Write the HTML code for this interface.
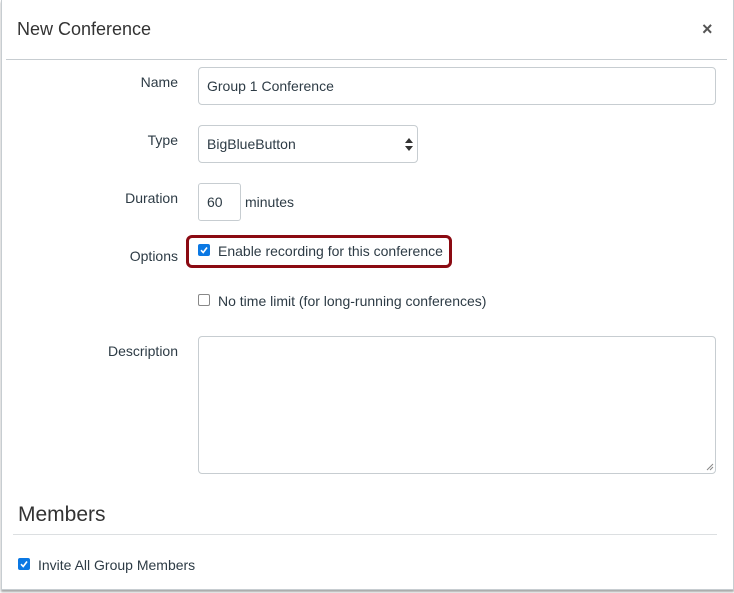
<!DOCTYPE html>
<html><head><style>
body{margin:0;width:734px;height:593px;background:#fff;font-family:"Liberation Sans",sans-serif;color:#2d3b45;position:relative;overflow:hidden}
.a{position:absolute}
.frame{left:1px;top:0;width:731px;height:589px;border:1px solid #c7cdd1;border-top:none;box-shadow:0 2px 2px rgba(0,0,0,.35)}
.lbl{font-size:14px;text-align:right;width:178px;left:0}
.box{border:1px solid #c7cdd1;border-radius:4px;background:#fff;box-sizing:border-box}
.t{font-size:14px}
.cb{width:12px;height:12px;border-radius:2px;box-sizing:border-box}
.on{background:#0b78e3}
.off{border:1px solid #888;background:#fff}
</style></head><body>
<div class="a frame"></div>
<div class="a" style="left:17px;top:19px;font-size:18px;color:#333">New Conference</div>
<div class="a" style="left:702px;top:19px;font-size:18px;font-weight:bold;color:#555">×</div>
<div class="a" style="left:6px;top:59px;width:721px;height:1px;background:#c7cdd1"></div>

<div class="a lbl" style="top:74px">Name</div>
<div class="a box" style="left:198px;top:67px;width:518px;height:38px"></div>
<div class="a t" style="left:207px;top:78px">Group 1 Conference</div>

<div class="a lbl" style="top:132px">Type</div>
<div class="a box" style="left:198px;top:125px;width:220px;height:38px;background:#fff"></div>
<div class="a t" style="left:207px;top:136px">BigBlueButton</div>
<svg class="a" style="left:405px;top:138px" width="8" height="13"><path d="M0 5L4 0L8 5Z M0 8L4 13L8 8Z" fill="#333"/></svg>

<div class="a lbl" style="top:190px">Duration</div>
<div class="a box" style="left:198px;top:183px;width:43px;height:38px;border-radius:3px"></div>
<div class="a t" style="left:207px;top:194px">60</div>
<div class="a t" style="left:245px;top:194px">minutes</div>

<div class="a lbl" style="top:248px">Options</div>
<div class="a" style="left:186px;top:235px;width:260px;height:27px;border:3px solid #8b0a12;border-radius:6px"></div>
<svg class="a" style="left:198px;top:244px" width="12" height="12"><rect width="12" height="12" rx="2" fill="#0b78e3"/><path d="M3 6.2L5.2 8.5L9 3.5" stroke="#fff" stroke-width="1.6" fill="none"/></svg>
<div class="a t" style="left:218px;top:243px">Enable recording for this conference</div>

<div class="a cb off" style="left:198px;top:294px"></div>
<div class="a t" style="left:218px;top:293px">No time limit (for long-running conferences)</div>

<div class="a lbl" style="top:343px">Description</div>
<div class="a box" style="left:198px;top:336px;width:518px;height:138px"></div>
<svg class="a" style="left:706px;top:463px" width="8" height="8"><path d="M1 7L7 1M4 7L7 4" stroke="#888" stroke-width="1"/></svg>

<div class="a" style="left:18px;top:503px;font-size:21px;color:#333">Members</div>
<div class="a" style="left:13px;top:534px;width:704px;height:1px;background:#dcdfe1"></div>
<svg class="a" style="left:18px;top:558px" width="12" height="12"><rect width="12" height="12" rx="2" fill="#0b78e3"/><path d="M3 6.2L5.2 8.5L9 3.5" stroke="#fff" stroke-width="1.6" fill="none"/></svg>
<div class="a t" style="left:38px;top:557px">Invite All Group Members</div>
</body></html>
